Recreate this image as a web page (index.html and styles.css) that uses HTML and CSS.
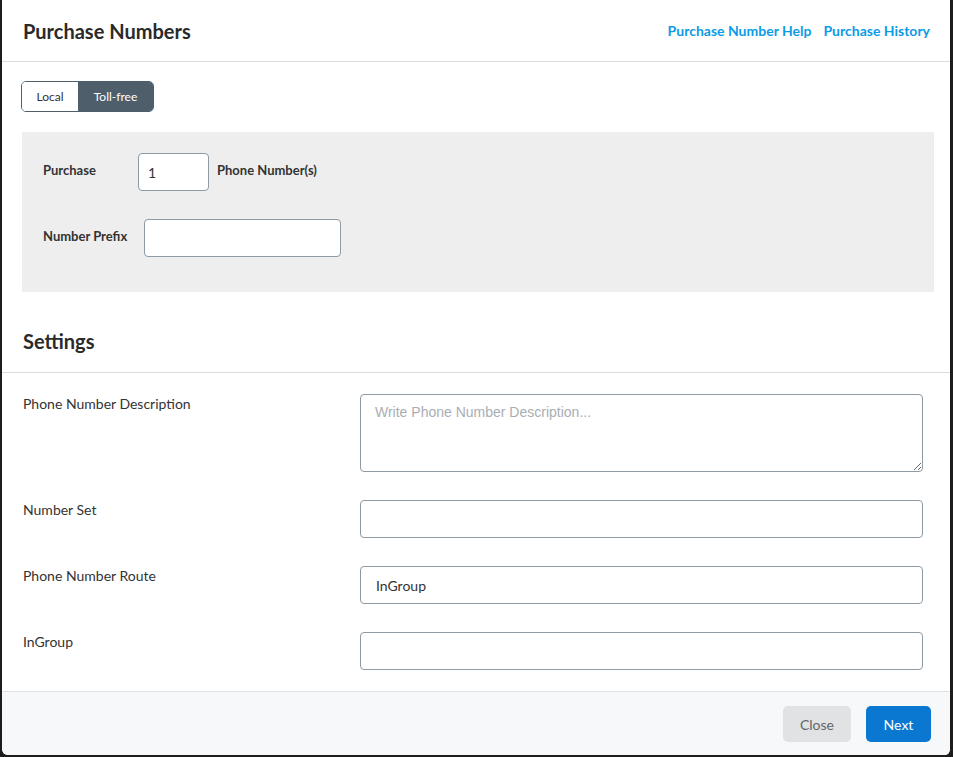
FILE: index.html
```html
<!DOCTYPE html>
<html lang="en">
<head>
<meta charset="utf-8">
<title>Purchase Numbers</title>
<link rel="stylesheet" href="styles.css">
</head>
<body>
<div class="modal">
  <header class="modal-header">
    <h1 class="title">Purchase Numbers</h1>
    <nav class="header-links">
      <a href="#" class="link">Purchase Number Help</a>
      <a href="#" class="link">Purchase History</a>
    </nav>
  </header>
  <section class="top-body">
    <div class="toggle">
      <button class="toggle-btn">Local</button>
      <button class="toggle-btn active">Toll-free</button>
    </div>
    <div class="panel">
      <div class="panel-row">
        <label class="panel-label purchase-label">Purchase</label>
        <input class="field qty" type="text" value="1">
        <span class="panel-label after">Phone Number(s)</span>
      </div>
      <div class="panel-row">
        <label class="panel-label prefix-label">Number Prefix</label>
        <input class="field prefix" type="text">
      </div>
    </div>
  </section>
  <h2 class="settings-title">Settings</h2>
  <section class="settings">
    <label class="row-label">Phone Number Description</label>
    <textarea class="field textarea" placeholder="Write Phone Number Description..."></textarea>
    <label class="row-label">Number Set</label>
    <input class="field wide" type="text">
    <label class="row-label">Phone Number Route</label>
    <input class="field wide" type="text" value="InGroup">
    <label class="row-label">InGroup</label>
    <input class="field wide" type="text">
  </section>
  <footer class="modal-footer">
    <button class="btn btn-close">Close</button>
    <button class="btn btn-next">Next</button>
  </footer>
</div>
</body>
</html>
```

FILE: styles.css
```css
* { box-sizing: border-box; }

html, body {
  margin: 0;
  padding: 0;
  background: #1d1d1d;
  height: 757px;
  overflow: hidden;
}

body {
  font-family: Lato, "Noto Sans", sans-serif;
  color: #333;
}

.modal {
  margin-left: 2px;
  width: 949px;
  height: 755px;
  background: #fff;
  border-radius: 0 0 6px 6px;
  overflow: hidden;
  display: flex;
  flex-direction: column;
  border-right: 1px solid #1d1d1d;
}

.modal-header {
  height: 62px;
  flex: none;
  border-bottom: 1px solid #dcdcdc;
  display: flex;
  align-items: center;
  justify-content: space-between;
  padding: 0 20px 0 21px;
}

.title {
  margin: 0;
  font-size: 20px;
  font-weight: 700;
  color: #2a2a2a;
  line-height: 24px;
}

.header-links {
  display: flex;
  gap: 12px;
}

.link {
  color: #0c9be6;
  font-weight: 700;
  font-size: 14px;
  text-decoration: none;
  line-height: 17px;
}

.top-body {
  padding: 19px 16px 0 20px;
  flex: none;
}

.toggle {
  display: flex;
  width: fit-content;
  height: 31px;
  border: 1px solid #4e5e6b;
  border-radius: 5px;
  overflow: hidden;
  margin-left: -1px;
}

.toggle-btn {
  font-family: Lato, sans-serif;
  font-size: 12px;
  border: none;
  background: #fff;
  color: #333;
  padding: 0;
  width: 56px;
  cursor: pointer;
}

.toggle-btn.active {
  background: #4e5e6b;
  color: #fff;
  width: 75px;
}

.panel {
  margin-top: 20px;
  background: #eeeeee;
  height: 160px;
  padding: 21px 21px 0 21px;
  display: flex;
  flex-direction: column;
  gap: 28px;
}

.panel-row {
  display: flex;
  align-items: center;
  height: 38px;
}

.panel-label {
  font-size: 13px;
  font-weight: 700;
  color: #333;
  padding-bottom: 4px;
}

.purchase-label { width: 95px; }
.prefix-label { margin-right: 17px; }
.after { margin-left: 8px; }

.field {
  font-family: Lato, sans-serif;
  font-size: 14px;
  color: #333;
  border: 1px solid #8e9aa4;
  border-radius: 4px;
  background: #fff;
  height: 38px;
  outline: none;
}

.qty {
  width: 71px;
  padding: 0 9px;
}

.prefix {
  width: 197px;
}

.settings-title {
  margin: 0;
  flex: none;
  height: 81px;
  padding: 37px 21px 0 21px;
  font-size: 20px;
  line-height: 24px;
  font-weight: 700;
  color: #2a2a2a;
  border-bottom: 1px solid #dcdcdc;
}

.settings {
  flex: none;
  display: grid;
  grid-template-columns: 337px 563px;
  row-gap: 28px;
  padding: 21px 27px 21px 21px;
  align-items: start;
}

.row-label {
  font-size: 14px;
  line-height: 20px;
  color: #333;
}

.wide {
  width: 563px;
  padding: 0 15px;
}

.textarea {
  width: 563px;
  height: 78px;
  padding: 9px 14px;
  resize: vertical;
  display: block;
}

.textarea::placeholder {
  font-family: "Liberation Sans", Arial, sans-serif;
  font-size: 14px;
  color: #a9aeb4;
}

.modal-footer {
  flex: 1;
  border-top: 1px solid #dfe1e4;
  background: #f7f8fa;
  display: flex;
  justify-content: flex-end;
  align-items: flex-start;
  gap: 15px;
  padding: 14px 19px 0 0;
}

.btn {
  font-family: Lato, sans-serif;
  font-size: 14px;
  height: 36px;
  border: none;
  border-radius: 5px;
  cursor: pointer;
}

.btn-close {
  width: 68px;
  background: #e1e2e4;
  color: #60656b;
}

.btn-next {
  width: 65px;
  background: #0a77d1;
  color: #fff;
}
```
